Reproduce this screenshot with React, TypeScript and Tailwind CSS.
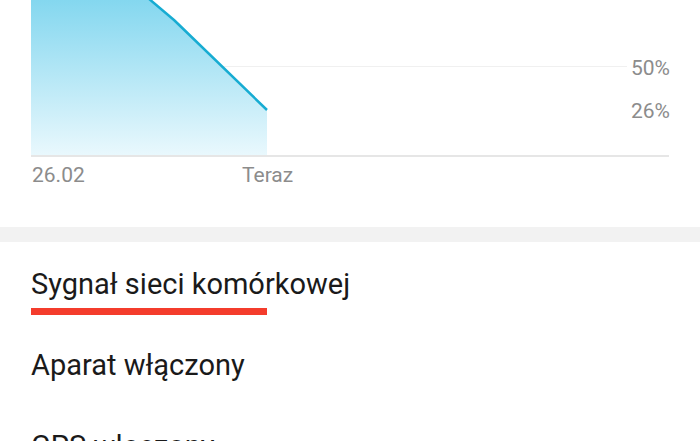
const ROWS = ["Aparat włączony", "GPS włączony"];

function BatteryChart() {
  return (
    <div className="relative h-[157px]">
      <svg width="638" height="157" viewBox="0 0 638 157" className="block">
        <defs>
          <linearGradient id="fill" x1="0" y1="0" x2="0" y2="1">
            <stop offset="0%" stopColor="#84d7ef" />
            <stop offset="100%" stopColor="#e9f8fd" />
          </linearGradient>
        </defs>
        <line x1="0" y1="66.5" x2="596" y2="66.5" stroke="#f0f0f0" strokeWidth="1" />
        <polygon points="0,0 119,0 143,20 236,110 236,155 0,155" fill="url(#fill)" />
        <polyline
          points="117,-2 143,20 236,110"
          fill="none"
          stroke="#17acd2"
          strokeWidth="2.5"
          strokeLinejoin="round"
        />
        <rect x="0" y="155" width="638" height="2" fill="#e6e6e6" />
      </svg>
      <span className="absolute right-[-1px] top-[56px] text-[21px] leading-[24px] text-[#8c8c8c]">50%</span>
      <span className="absolute right-[-1px] top-[99px] text-[21px] leading-[24px] text-[#8c8c8c]">26%</span>
    </div>
  );
}

export default function App() {
  return (
    <div
      className="h-[441px] w-full overflow-hidden bg-white"
      style={{ fontFamily: "Roboto, 'Noto Sans', sans-serif" }}
    >
      <div className="px-[31px]">
        <BatteryChart />
        <div className="mt-[6px] flex text-[21px] leading-[24px] text-[#8c8c8c]">
          <span className="w-[211px] pl-px">26.02</span>
          <span>Teraz</span>
        </div>
      </div>

      <div className="mt-[40px] h-[15px] bg-[#f2f2f2]" />

      <div className="px-[31px] pt-[25px] text-[29px] leading-[34px] text-[#1a1a1a]">
        <div>Sygnał sieci komórkowej</div>
        <div className="mt-[7px] h-[7px] w-[236px] bg-[#f43c2c]" />
        <div className="mt-[33px]">{ROWS[0]}</div>
        <div className="mt-[47px]">{ROWS[1]}</div>
      </div>
    </div>
  );
}
